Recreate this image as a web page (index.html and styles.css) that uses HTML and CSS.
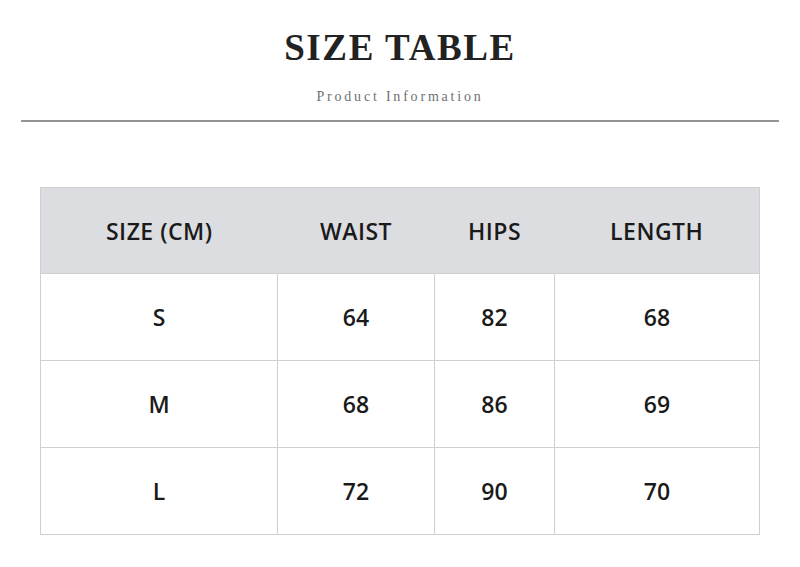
FILE: index.html
```html
<!DOCTYPE html>
<html lang="en">
<head>
<meta charset="utf-8">
<title>Size Table</title>
<link rel="stylesheet" href="styles.css">
</head>
<body>
<header class="head">
  <h1 class="title">SIZE TABLE</h1>
  <p class="subtitle">Product Information</p>
</header>
<hr class="rule">
<main class="wrap">
  <table class="sizes">
    <colgroup>
      <col class="c1"><col class="c2"><col class="c3"><col class="c4">
    </colgroup>
    <thead>
      <tr><th>SIZE (CM)</th><th>WAIST</th><th>HIPS</th><th>LENGTH</th></tr>
    </thead>
    <tbody>
      <tr><td>S</td><td>64</td><td>82</td><td>68</td></tr>
      <tr><td>M</td><td>68</td><td>86</td><td>69</td></tr>
      <tr><td>L</td><td>72</td><td>90</td><td>70</td></tr>
    </tbody>
  </table>
</main>
</body>
</html>
```
FILE: styles.css
```css
html, body {
  margin: 0;
  padding: 0;
  background: #ffffff;
}
body {
  width: 800px;
  height: 567px;
  overflow: hidden;
}
.head {
  text-align: center;
  padding-top: 25px;
}
.title {
  margin: 0;
  font-family: "Liberation Serif", "DejaVu Serif", serif;
  font-weight: bold;
  font-size: 37px;
  line-height: 46px;
  letter-spacing: 1.6px;
  color: #222222;
}
.subtitle {
  margin: 18px 0 0;
  font-family: "Liberation Serif", serif;
  font-size: 14px;
  line-height: 16px;
  letter-spacing: 2.8px;
  color: #6f6f6f;
}
.rule {
  margin: 15px 21px 0;
  border: 0;
  height: 2px;
  background: #939393;
}
.wrap {
  padding: 65px 0 0 40px;
}
.sizes {
  border-collapse: collapse;
  width: 719px;
  table-layout: fixed;
  font-family: "Open Sans", "Noto Sans", sans-serif;
  font-weight: 600;
  font-size: 23px;
  color: #1a1a1a;
  border: 1px solid #cfcfcf;
}
.c1 { width: 237px; }
.c2 { width: 157px; }
.c3 { width: 120px; }
.c4 { width: 205px; }
.sizes th {
  background: #dcdde1;
  height: 85px;
  padding: 0;
  font-weight: 600;
  letter-spacing: 0.5px;
  text-align: center;
  border: 0;
  border-bottom: 1px solid #cfcfcf;
}
.sizes td {
  height: 86px;
  padding: 0;
  text-align: center;
  border: 1px solid #cfcfcf;
}
```
